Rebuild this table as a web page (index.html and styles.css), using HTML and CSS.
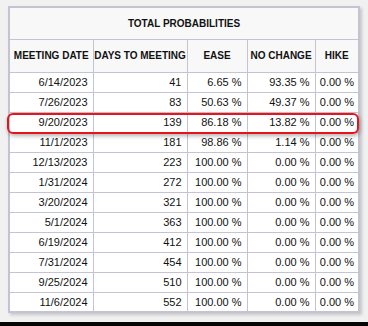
FILE: index.html
```html
<html>
<head>
<link rel="stylesheet" href="styles.css">
<title>Total Probabilities</title>
</head>
<body>
    <div class="page">
        <div class="tableWrap">
            <table class="probTable">
                <colgroup>
                    <col class="colDate">
                    <col class="colDays">
                    <col class="colEase">
                    <col class="colSame">
                    <col class="colHike">
                </colgroup>
                <tr class="titleRow"><th colspan="5">TOTAL PROBABILITIES</th></tr>
                <tr class="headRow">
                    <th>MEETING DATE</th>
                    <th>DAYS TO MEETING</th>
                    <th>EASE</th>
                    <th>NO CHANGE</th>
                    <th>HIKE</th>
                </tr>
                <tr><td>6/14/2023</td><td>41</td><td>6.65 %</td><td>93.35 %</td><td>0.00 %</td></tr>
                <tr><td>7/26/2023</td><td>83</td><td>50.63 %</td><td>49.37 %</td><td>0.00 %</td></tr>
                <tr><td>9/20/2023</td><td>139</td><td>86.18 %</td><td>13.82 %</td><td>0.00 %</td></tr>
                <tr><td>11/1/2023</td><td>181</td><td>98.86 %</td><td>1.14 %</td><td>0.00 %</td></tr>
                <tr><td>12/13/2023</td><td>223</td><td>100.00 %</td><td>0.00 %</td><td>0.00 %</td></tr>
                <tr><td>1/31/2024</td><td>272</td><td>100.00 %</td><td>0.00 %</td><td>0.00 %</td></tr>
                <tr><td>3/20/2024</td><td>321</td><td>100.00 %</td><td>0.00 %</td><td>0.00 %</td></tr>
                <tr><td>5/1/2024</td><td>363</td><td>100.00 %</td><td>0.00 %</td><td>0.00 %</td></tr>
                <tr><td>6/19/2024</td><td>412</td><td>100.00 %</td><td>0.00 %</td><td>0.00 %</td></tr>
                <tr><td>7/31/2024</td><td>454</td><td>100.00 %</td><td>0.00 %</td><td>0.00 %</td></tr>
                <tr><td>9/25/2024</td><td>510</td><td>100.00 %</td><td>0.00 %</td><td>0.00 %</td></tr>
                <tr><td>11/6/2024</td><td>552</td><td>100.00 %</td><td>0.00 %</td><td>0.00 %</td></tr>
            </table>
            <div class="highlight"></div>
        </div>
    </div>
    <div class="bottomBar"></div>
</body>
</html>
```

FILE: styles.css
```css
body {margin: 0;
      background-color: #f1f1f1;
      font-family: "Liberation Sans", Arial, sans-serif;
      color: #111}
.page {padding: 6px 10px 0 8px;
       height: 322px;
       box-sizing: border-box}
.tableWrap {position: relative;
            width: 350px}
.probTable {width: 350px;
            table-layout: fixed;
            border-collapse: collapse;
            border: 2px solid #c3c3d3;
            background-color: #ffffff;
            box-shadow: 2px 2px 3px rgba(0, 0, 0, 0.18)}
.colDate {width: 84px}
.colDays {width: 94px}
.colEase {width: 60px}
.colSame {width: 68px}
.colHike {width: 44px}
.probTable th {font-size: 10px;
               font-weight: bold;
               text-align: center;
               border: 1px solid #c3c3d3;
               padding: 0}
.titleRow th {height: 32px;
              background-color: #f8f8f8}
.headRow th {height: 33px;
             background-color: #f8f8f8}
.probTable td {font-size: 11px;
               text-align: right;
               border: 1px solid #c3c3d3;
               height: 20px;
               padding: 0 5px 0 0}
.probTable td:last-child {padding-right: 4px}
.highlight {position: absolute;
            left: -1px;
            top: 107px;
            width: 348px;
            height: 17px;
            border: 2px solid #e8141a;
            border-radius: 6px;
            box-shadow: 1px 2px 4px rgba(0, 0, 0, 0.3)}
.bottomBar {height: 4px;
            background-color: #050505}
```
